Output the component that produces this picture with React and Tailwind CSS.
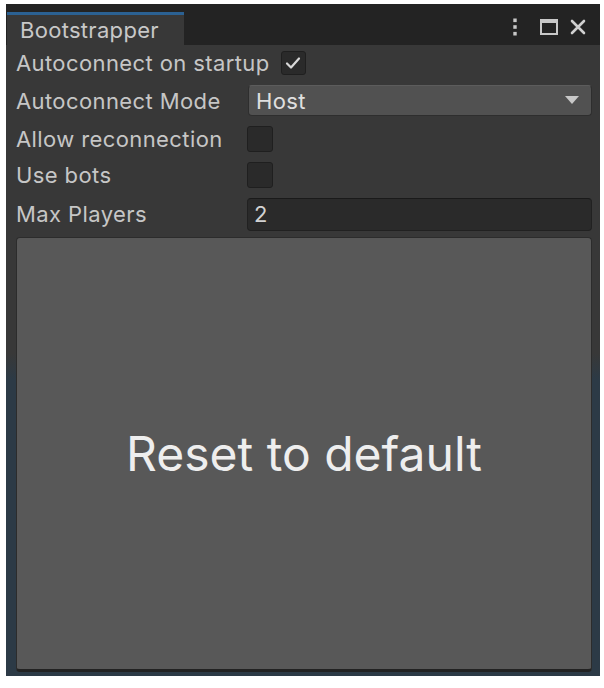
import React from "react";

function Check() {
  return (
    <svg width="16" height="14" viewBox="0 0 16 14" fill="none">
      <path d="M2 7.5 L6 11.5 L14 2.5" stroke="#d8d8d8" strokeWidth="2.2" strokeLinecap="round" strokeLinejoin="round" />
    </svg>
  );
}

export default function App() {
  return (
    <div className="w-[604px] h-[688px] bg-white relative" style={{ fontFamily: "Inter, 'Noto Sans', sans-serif" }}>
      <div className="absolute left-[6px] top-[4px] w-[594px] h-[672px] flex flex-col bg-[linear-gradient(180deg,#383838_0%,#383838_52%,#2c3a46_56%,#2c3a46_100%)]">
        {/* header */}
        <div className="h-[41px] bg-[#232323] flex items-end shrink-0">
          <div className="ml-[1px] w-[177px] h-[33px] bg-[#383838] border-t-[3px] border-[#2b6193] flex items-center pl-[13px] text-[22px] tracking-[0.3px] text-[#c8c8c8] leading-none">
            Bootstrapper
          </div>
          <div className="flex-1" />
          <div className="flex items-center self-stretch pt-[4px] pr-[14px]">
            <svg width="4" height="18" viewBox="0 0 4 18">
              <rect x="0.3" y="0.5" width="3.4" height="3.6" fill="#c8c8c8" />
              <rect x="0.3" y="7.2" width="3.4" height="3.6" fill="#c8c8c8" />
              <rect x="0.3" y="13.9" width="3.4" height="3.6" fill="#c8c8c8" />
            </svg>
            <svg className="ml-[23px]" width="18" height="16" viewBox="0 0 18 16">
              <rect x="1" y="1" width="16" height="14" fill="none" stroke="#c8c8c8" strokeWidth="2" />
              <rect x="1" y="1" width="16" height="3" fill="#c8c8c8" />
            </svg>
            <svg className="ml-[12px]" width="16" height="16" viewBox="0 0 16 16">
              <path d="M2 2 L14 14 M14 2 L2 14" stroke="#d0d0d0" strokeWidth="2.6" strokeLinecap="round" />
            </svg>
          </div>
        </div>

        {/* rows */}
        <div className="flex flex-col pl-[10px] pr-[8px] text-[22px] tracking-[0.4px] text-[#c6c6c6] leading-none">
          <div className="h-[35px] flex items-center">
            <span>Autoconnect on startup</span>
            <div className="ml-[11px] w-[25px] h-[24px] rounded-[3px] bg-[#2a2a2a] border border-[#1f1f1f] flex items-center justify-center">
              <Check />
            </div>
          </div>
          <div className="h-[41px] flex items-center">
            <span className="w-[232px]">Autoconnect Mode</span>
            <div className="flex-1 h-[31px] rounded-[4px] bg-[#515151] border border-[#2e2e2e] border-t-[#5c5c5c] flex items-center pl-[7px] pr-[12px] text-[#e0e0e0]">
              <span className="flex-1">Host</span>
              <svg width="14" height="9" viewBox="0 0 14 9">
                <path d="M0 0 L14 0 L7 8 Z" fill="#c8c8c8" />
              </svg>
            </div>
          </div>
          <div className="h-[36px] flex items-center">
            <span className="w-[231px]">Allow reconnection</span>
            <div className="w-[26px] h-[26px] rounded-[3px] bg-[#2a2a2a] border border-[#1f1f1f]" />
          </div>
          <div className="h-[36px] flex items-center">
            <span className="w-[231px]">Use bots</span>
            <div className="w-[26px] h-[26px] rounded-[3px] bg-[#2a2a2a] border border-[#1f1f1f]" />
          </div>
          <div className="h-[42px] flex items-center">
            <span className="w-[231px]">Max Players</span>
            <div className="flex-1 h-[33px] rounded-[4px] bg-[#2a2a2a] border border-[#212121] border-t-[#1a1a1a] flex items-center pl-[6px] text-[#d2d2d2]">
              2
            </div>
          </div>
        </div>

        <div className="mt-[2px] ml-[10px] mr-[8px] h-[435px] rounded-[4px] bg-[#585858] border border-[#2c2c2c] border-b-[3px] border-b-[#222222] flex items-center justify-center text-[48px] text-[#eeeeee] leading-none">
          Reset to default
        </div>
      </div>
    </div>
  );
}
